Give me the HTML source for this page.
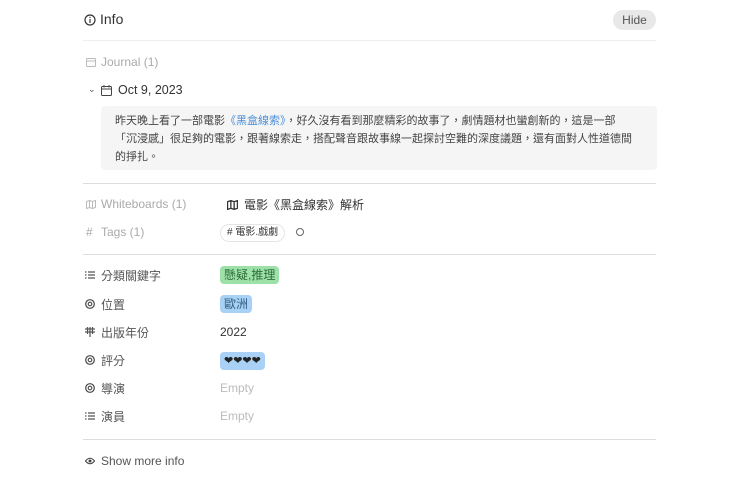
<!DOCTYPE html>
<html><head><meta charset="utf-8"><style>
body{margin:0;width:740px;height:483px;background:#fff;font-family:"Liberation Sans","Noto Sans CJK TC",sans-serif;color:#333;position:relative;overflow:hidden}
.a{position:absolute;white-space:nowrap}
.hr{position:absolute;left:83px;width:573px;height:1px;background:#ddd}
.lab{font-size:12px;color:#555}
.g{color:#aaa}
.ic{position:absolute}
.pill{display:inline-block;padding:1px 4px;border-radius:4px;font-size:12px;line-height:16px}
</style></head><body>
<svg class="ic" style="left:84px;top:14px" width="12" height="12" viewBox="0 0 12 12"><circle cx="6" cy="6" r="5" fill="none" stroke="#333" stroke-width="1.2"/><line x1="6" y1="5" x2="6" y2="9" stroke="#333" stroke-width="1.2"/><circle cx="6" cy="3.4" r=".7" fill="#333"/></svg>
<div class="a" style="left:100px;top:11px;font-size:14px;color:#333">Info</div>
<div class="a" style="left:613px;top:10px;width:43px;height:20px;background:#e8e8e8;border-radius:10px;font-size:12px;line-height:20px;text-align:center;color:#555">Hide</div>
<div class="hr" style="top:40px;background:#eee"></div>

<svg class="ic" style="left:86px;top:57px" width="10" height="10" viewBox="0 0 10 10"><rect x=".5" y="1.5" width="9" height="8" rx="1" fill="none" stroke="#bbb"/><line x1=".5" y1="4" x2="9.5" y2="4" stroke="#bbb"/></svg>
<div class="a lab g" style="left:101px;top:55px">Journal (1)</div>
<div class="a" style="left:88px;top:84px;font-size:9px;color:#555">⌄</div>
<svg class="ic" style="left:101px;top:85px" width="11" height="11" viewBox="0 0 11 11"><rect x=".5" y="1.5" width="10" height="9" rx="1" fill="none" stroke="#444"/><line x1=".5" y1="4" x2="10.5" y2="4" stroke="#444"/><line x1="3" y1="0" x2="3" y2="2.5" stroke="#444"/><line x1="8" y1="0" x2="8" y2="2.5" stroke="#444"/></svg>
<div class="a" style="left:118px;top:83px;font-size:12.5px;color:#333">Oct 9, 2023</div>
<div class="a" style="left:101px;top:106px;width:556px;height:64px;background:#f5f5f5;border-radius:4px"></div>
<div class="a" style="left:115px;top:112px;font-size:11px;line-height:18px;color:#444">昨天晚上看了一部電影<span style="color:#4a8fd8">《黑盒線索》</span>，好久沒有看到那麼精彩的故事了，劇情題材也蠻創新的，這是一部<br>「沉浸感」很足夠的電影，跟著線索走，搭配聲音跟故事線一起探討空難的深度議題，還有面對人性道德間<br>的掙扎。</div>
<div class="hr" style="top:183px"></div>

<svg class="ic" style="left:86px;top:200px" width="10" height="9" viewBox="0 0 10 9"><path d="M.5 1.5L3.5.5 6.5 1.5 9.5.5V7.5L6.5 8.5 3.5 7.5.5 8.5Z M3.5.5V7.5 M6.5 1.5V8.5" fill="none" stroke="#bbb"/></svg>
<div class="a lab g" style="left:101px;top:197px">Whiteboards (1)</div>
<svg class="ic" style="left:227px;top:200px" width="11" height="10" viewBox="0 0 10 9"><path d="M.5 1.5L3.5.5 6.5 1.5 9.5.5V7.5L6.5 8.5 3.5 7.5.5 8.5Z M3.5.5V7.5 M6.5 1.5V8.5" fill="none" stroke="#333" stroke-width="1.2"/></svg>
<div class="a" style="left:244px;top:196px;font-size:12px;color:#333">電影《黑盒線索》解析</div>
<div class="a lab g" style="left:86px;top:225px">#</div>
<div class="a lab g" style="left:101px;top:225px">Tags (1)</div>
<div class="a" style="left:220px;top:224px;border:1px solid #e5e5e5;border-radius:9px;padding:0 6px;font-size:10px;line-height:16px;color:#333"># 電影.戲劇</div>
<div class="a" style="left:296px;top:228px;width:6px;height:6px;border:1px solid #666;border-radius:50%"></div>
<div class="hr" style="top:254px"></div>

<svg class="ic" style="left:85px;top:271px" width="10" height="8"><path d="M0 1h1.5M3 1h7M0 4h1.5M3 4h7M0 7h1.5M3 7h7" stroke="#555" stroke-width="1.2"/></svg>
<div class="a lab" style="left:101px;top:267px">分類關鍵字</div>
<div class="a pill" style="left:220px;top:266px;background:#9de0a8;color:#2f6d3a">懸疑,推理</div>
<svg class="ic" style="left:85px;top:299px" width="10" height="10"><circle cx="5" cy="5" r="4.3" fill="none" stroke="#444" stroke-width="1.2"/><circle cx="5" cy="5" r="1.8" fill="none" stroke="#444" stroke-width="1.1"/></svg>
<div class="a lab" style="left:101px;top:296px">位置</div>
<div class="a pill" style="left:220px;top:295px;background:#a8d1f5;color:#345d85">歐洲</div>
<svg class="ic" style="left:85px;top:327px" width="10" height="10"><path d="M0 2h10M0 5h10M2.5 0v7M5 0v10M7.5 0v7" stroke="#555" stroke-width="1.2"/></svg>
<div class="a lab" style="left:101px;top:324px">出版年份</div>
<div class="a" style="left:220px;top:325px;font-size:12px;color:#333">2022</div>
<svg class="ic" style="left:85px;top:355px" width="10" height="10"><circle cx="5" cy="5" r="4.3" fill="none" stroke="#444" stroke-width="1.2"/><circle cx="5" cy="5" r="1.8" fill="none" stroke="#444" stroke-width="1.1"/></svg>
<div class="a lab" style="left:101px;top:352px">評分</div>
<div class="a pill" style="left:220px;top:352px;background:#a8d1f5;color:#222;font-size:11px">❤❤❤❤</div>
<svg class="ic" style="left:85px;top:383px" width="10" height="10"><circle cx="5" cy="5" r="4.3" fill="none" stroke="#444" stroke-width="1.2"/><circle cx="5" cy="5" r="1.8" fill="none" stroke="#444" stroke-width="1.1"/></svg>
<div class="a lab" style="left:101px;top:380px">導演</div>
<div class="a" style="left:220px;top:381px;font-size:12px;color:#bbb">Empty</div>
<svg class="ic" style="left:85px;top:412px" width="10" height="8"><path d="M0 1h1.5M3 1h7M0 4h1.5M3 4h7M0 7h1.5M3 7h7" stroke="#555" stroke-width="1.2"/></svg>
<div class="a lab" style="left:101px;top:408px">演員</div>
<div class="a" style="left:220px;top:409px;font-size:12px;color:#bbb">Empty</div>
<div class="hr" style="top:439px"></div>
<svg class="ic" style="left:85px;top:457px" width="10" height="8"><path d="M.5 4Q5 -1.5 9.5 4Q5 9.5 .5 4Z" fill="none" stroke="#444" stroke-width="1.1"/><circle cx="5" cy="4" r="1.5" fill="#444"/></svg>
<div class="a lab" style="left:101px;top:454px">Show more info</div>
</body></html>
